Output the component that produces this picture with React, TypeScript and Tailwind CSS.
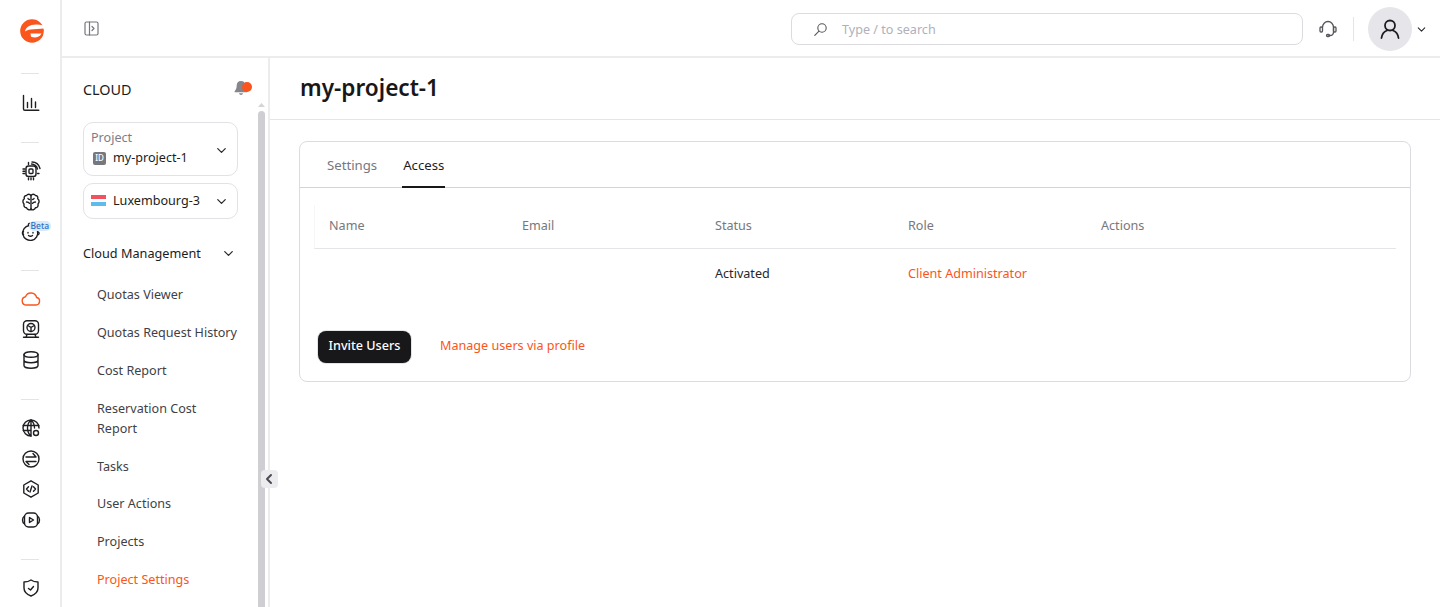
import { ChevronDown, ChevronLeft } from "lucide-react";

const FONT = "font-['Noto_Sans',sans-serif]";

function Ico({ children, color = "#1f1f23" }: { children: React.ReactNode; color?: string }) {
  return (
    <svg width="20" height="20" viewBox="0 0 20 20" fill="none" stroke={color} strokeWidth="1.4" strokeLinecap="round" strokeLinejoin="round">
      {children}
    </svg>
  );
}

function RailItem({ children }: { children: React.ReactNode }) {
  return <div className="relative flex h-[30.5px] w-full items-center justify-center pl-px">{children}</div>;
}

function RailDivider({ mt }: { mt: string }) {
  return <div className={`h-px w-[18px] shrink-0 bg-[#e4e4e7] ${mt}`} />;
}

function Logo() {
  return (
    <svg width="24" height="26" viewBox="0 0 24 26" className="ml-[3px]">
      <circle cx="12" cy="13" r="11.800" fill="#f9551c" />
      <path d="M5 13.500C6 8 12 4.500 24.500 7.500L24.500 10.500 10.500 11.500C8.500 11.700 6.500 12.500 5 13.500Z" fill="#fff" />
      <path d="M10.500 15.500H21.500C19.500 19.500 15 20.500 11 18.800Z" fill="#fff" />
    </svg>
  );
}

function Rail() {
  return (
    <aside className="flex w-[62px] shrink-0 flex-col items-center border-r-2 border-[#ececee] bg-white">
      <div className="flex h-[62px] w-full shrink-0 items-center justify-center">
        <Logo />
      </div>
      <RailDivider mt="mt-[11px]" />
      <div className="mt-[14px] w-full">
        <RailItem>
          <Ico>
            <path d="M2.500 2.500v13.500c0 .8.5 1.300 1.300 1.300h14" />
            <path d="M6.500 9.500v5M10.500 5.500v9M14.500 9v5.500" />
          </Ico>
        </RailItem>
      </div>
      <RailDivider mt="mt-[23.500px]" />
      <div className="mt-[13px] w-full">
        <RailItem>
          <Ico>
            <rect x="5" y="5" width="10" height="10.500" rx="2.500" />
            <rect x="8" y="8" width="4" height="4.500" rx="1" />
            <path d="M2 8h2M2 10.200h2M2 12.500h2M7.500 17v1.800M10 17v1.800M12.500 17v1.800M16.500 12.500h1.500M7.500 3.500V1.500M10.500 3c2.500 0 5.500 2 6 5M11 1c4 0 7 3 8 6.500" />
          </Ico>
        </RailItem>
        <RailItem>
          <Ico>
            <path d="M10 3.500v13.500" />
            <path d="M10 3.500C9 1.800 6.500 1.800 5.500 3.500 3.800 3.500 2.800 5 3.300 6.700 1.500 8 1.500 10.500 3 12c-.5 2 .5 3.500 2.500 3.800.8 2.200 3.500 2.700 4.500 1.200" />
            <path d="M10 3.500c1-1.700 3.500-1.700 4.500 0 1.700 0 2.700 1.500 2.200 3.200 1.800 1.300 1.800 3.800.3 5.300.5 2-.5 3.500-2.500 3.800-.8 2.200-3.500 2.700-4.500 1.200" />
            <path d="M5.500 10c1.500 0 2.500.5 3 1.300M14.500 10c-1.500 0-2.500.5-3 1.300M7 6.500c.3.700.8 1 1.500 1M13 6.500c-.3.700-.8 1-1.500 1" />
          </Ico>
        </RailItem>
        <RailItem>
          <Ico>
            <path d="M8 3.500a7.500 7.500 0 1 0 8.500 5.500" />
            <path d="M8 3.500C6.800 2.500 7.500 1 9 1.500" />
            <path d="M7 10.500v.5M12 10.500v.5M7.500 13.500c1.200 1 2.800 1 4 0" />
            <path d="M2.500 9.500c-1.500.3-1.500 2.700 0 3M17 10c1.500.3 1.500 2.300 0 2.700" />
          </Ico>
          <span className="absolute left-[29px] top-[4px] rounded-full bg-[#d8e9fb] px-[1.500px] text-[8.500px] leading-[10px] font-medium text-[#2f6fc4]">Beta</span>
        </RailItem>
      </div>
      <RailDivider mt="mt-[22px]" />
      <div className="mt-[13px] w-full">
        <RailItem>
          <Ico color="#f9551c">
            <path d="M5.500 16h9.500a3.800 3.800 0 0 0 .6-7.500A5.800 5.800 0 0 0 4.500 7.700 4.200 4.200 0 0 0 5.500 16Z" />
          </Ico>
        </RailItem>
        <RailItem>
          <Ico>
            <rect x="2.500" y="1.800" width="15" height="13.500" rx="3.500" />
            <circle cx="10" cy="8.500" r="4" />
            <path d="M10 8.500v4M10 8.500 6.800 6.500M10 8.500l3.200-2" />
            <path d="M2.500 18.200h15M6 15.500l-1 2.700M14 15.500l1 2.700" />
          </Ico>
        </RailItem>
        <RailItem>
          <Ico>
            <ellipse cx="10" cy="4.500" rx="7" ry="2.800" />
            <path d="M3 4.500v11c0 1.500 3 2.800 7 2.800s7-1.300 7-2.800v-11M3 10c0 1.500 3 2.800 7 2.800s7-1.300 7-2.800" />
          </Ico>
        </RailItem>
      </div>
      <RailDivider mt="mt-[24px]" />
      <div className="mt-[13px] w-full">
        <RailItem>
          <Ico>
            <path d="M18 10a8 8 0 1 0-8 8" />
            <path d="M10 2c-2.500 2-3.500 5-3.500 8s1 6 3.500 8M10 2c2.500 2 3.500 5 3.500 8M2.300 7.500h15.400M2.300 12.500H10M10 2v16" />
            <circle cx="15" cy="15" r="2.500" />
          </Ico>
        </RailItem>
        <RailItem>
          <Ico>
            <circle cx="10" cy="10" r="8" />
            <path d="M5 8h10l-3-3.500M15 12.500H5l3 3" />
          </Ico>
        </RailItem>
        <RailItem>
          <Ico>
            <path d="M10 1.800 17.200 6v8L10 18.200 2.800 14V6Z" />
            <path d="M7.500 7.800 5.500 10l2 2.200M12.500 7.800l2 2.200-2 2.200M11 7l-2 6" />
          </Ico>
        </RailItem>
        <RailItem>
          <Ico>
            <rect x="3.500" y="3" width="13" height="14" rx="4" />
            <path d="M3.500 6C2 7 1.500 8.500 1.500 10s.5 3 2 4M16.500 6c1.500 1 2 2.500 2 4s-.5 3-2 4" />
            <path d="M8.500 7.500v5l4-2.500Z" />
          </Ico>
        </RailItem>
      </div>
      <RailDivider mt="mt-[24px]" />
      <div className="mt-[13px] w-full">
        <RailItem>
          <Ico>
            <path d="M10 2c2 1.500 4.500 2 7 2v6c0 4-3 6.500-7 8-4-1.500-7-4-7-8V4c2.500 0 5-.5 7-2Z" />
            <path d="m7.500 10.500 2 1.500 3-3.500" />
          </Ico>
        </RailItem>
      </div>
    </aside>
  );
}

const menu = ["Quotas Viewer", "Quotas Request History", "Cost Report", "Reservation Cost Report", "Tasks", "User Actions", "Projects"];

function Sidebar() {
  return (
    <div className="relative flex w-[208px] shrink-0 border-r-2 border-[#ececee] bg-white">
      <div className="flex w-[196px] shrink-0 flex-col overflow-hidden pl-[21px]">
        <div className="flex h-[64px] shrink-0 items-center justify-between pb-[1px]">
          <span className="text-[14.400px] text-[#1c1c20]">CLOUD</span>
          <span className="relative mr-[9px] mt-[-4px] flex">
            <svg width="16" height="16" viewBox="0 0 16 16" fill="#85858c">
              <path d="M8 1c-2.800 0-4.300 2-4.300 4.500 0 3-1 4.500-2.200 6l.3.800h12.400l.3-.8C13.300 10 12.300 8.500 12.300 5.500 12.300 3 10.800 1 8 1ZM6 13.300c.3 1 1 1.700 2 1.700s1.700-.7 2-1.700Z" />
            </svg>
            <span className="absolute right-[-3px] top-[2px] h-[10px] w-[10px] rounded-full bg-[#f9551c]" />
          </span>
        </div>
        <div className="flex w-[155px] shrink-0 flex-col">
          <div className="flex h-[54px] items-center justify-between rounded-[10px] border border-[#e2e2e6] pl-[7px] pr-[8px]">
            <div className="flex flex-col">
              <span className="mt-[-1px] text-[12.600px] leading-[18px] text-[#7d7d8a]">Project</span>
              <span className="mt-[1px] flex items-center gap-[7px] text-[12.600px] leading-[20px] text-[#1c1c20]">
                <span className="ml-[2px] flex h-[13px] w-[13px] items-center justify-center rounded-[2px] bg-[#77777e] text-[8px] font-medium text-white">ID</span>
                my-project-1
              </span>
            </div>
            <ChevronDown size={15} className="mt-[2px] text-[#2a2a2e]" />
          </div>
          <div className="mt-[7px] flex h-[36px] items-center justify-between rounded-[10px] border border-[#e2e2e6] pl-[7px] pr-[8px]">
            <span className="flex items-center gap-[7px] text-[12.600px] text-[#1c1c20]">
              <span className="flex w-[15px] flex-col">
                <span className="h-[4px] bg-[#f0525f]" />
                <span className="h-[3px] bg-white" />
                <span className="h-[4px] bg-[#5dbcec]" />
              </span>
              Luxembourg-3
            </span>
            <ChevronDown size={15} className="text-[#2a2a2e]" />
          </div>
        </div>
        <div className="mt-[24px] flex w-[153px] items-center justify-between">
          <span className="text-[12.700px] leading-[20px] text-[#1c1c20]">Cloud Management</span>
          <ChevronDown size={15} className="text-[#2a2a2e]" />
        </div>
        <ul className="mt-[22px] flex w-[155px] flex-col gap-[17.900px] pl-[14px] text-[12.600px] leading-[20px] text-[#3f3f46]">
          {menu.map((m) => (
            <li key={m}>{m}</li>
          ))}
          <li className="text-[#f9551c]">Project Settings</li>
        </ul>
      </div>
      <div className="flex w-[7px] flex-col pt-[44px]">
        <svg width="7" height="6" viewBox="0 0 7 6" className="mb-[3px] shrink-0" fill="#d4d4d8">
          <path d="M3.500 1 7 5H0Z" />
        </svg>
        <div className="flex-1 rounded-t-[4px] bg-[#cfcfd3]" />
      </div>
      <button className="absolute left-[199px] top-[412px] flex h-[18px] w-[17px] items-center justify-center rounded-[4px] bg-[#ececee]">
        <ChevronLeft size={16} strokeWidth={3} className="mr-[1px] text-[#4a4a52]" />
      </button>
    </div>
  );
}

function TopBar() {
  return (
    <header className="flex h-[58px] shrink-0 items-center border-b-2 border-[#ececee] bg-white pl-[22px]">
      <svg width="15" height="15" viewBox="0 0 15 15" fill="none" stroke="#77777e" strokeWidth="1.2" strokeLinejoin="round" strokeLinecap="round">
        <rect x="1" y="1" width="13" height="13" rx="1.500" />
        <path d="M5.500 1v13M8 5.500 10 7.500 8 9.500" />
      </svg>
      <div className="ml-[692px] mt-[2px] flex h-[32px] w-[512px] items-center rounded-[8px] border border-[#dcdce0] pl-[21px]">
        <svg width="15" height="15" viewBox="0 0 15 15" fill="none" stroke="#55555c" strokeWidth="1.1" strokeLinecap="round">
          <circle cx="9" cy="6" r="4.200" />
          <path d="M6 9.200 1.800 13.400" />
        </svg>
        <span className="ml-[14px] mt-[2px] text-[12.600px] text-[#b0b0bc]">Type / to search</span>
      </div>
      <svg className="ml-[15px] mt-[2px]" width="20" height="20" viewBox="0 0 20 20" fill="none" stroke="#55555c" strokeWidth="1.300" strokeLinecap="round" strokeLinejoin="round">
        <path d="M4.500 8.500C4.500 5 7 2.500 10 2.500s5.500 2.500 5.500 6v4.500c0 2-1.500 3.500-3.500 3.500h-1" />
        <rect x="2" y="8" width="2.500" height="5" rx="1" />
        <rect x="15.500" y="8" width="2.500" height="5" rx="1" />
        <rect x="8.500" y="15.500" width="3" height="2" rx="1" />
      </svg>
      <div className="ml-[15px] mt-[2px] h-[24px] w-px bg-[#e4e4e7]" />
      <div className="ml-[14px] mt-[2px] flex h-[44px] w-[44px] items-center justify-center rounded-full bg-[#e6e6ea]">
        <svg width="24" height="24" viewBox="0 0 24 24" fill="none" stroke="#1c1c20" strokeWidth="1.800" strokeLinecap="round">
          <circle cx="12" cy="8.500" r="5" />
          <path d="M3.500 21c.5-4 3-6.500 5.500-7.500M20.500 21c-.5-4-3-6.500-5.500-7.500" />
        </svg>
      </div>
      <ChevronDown size={13} className="ml-[3px] mt-[2px] text-[#2a2a2e]" />
    </header>
  );
}

function Table() {
  const cols = ["Name", "Email", "Status", "Role", "Actions"];
  return (
    <div className="mx-[14px] mt-[17px]">
      <div className="grid h-[44px] grid-cols-[193px_193px_193px_193px_1fr] items-center border-b border-l border-b-[#e4e4e9] border-l-[#f6f6f7] pb-[1px] pl-[14px] text-[12.600px] text-[#77777e]">
        {cols.map((c) => (
          <span key={c}>{c}</span>
        ))}
      </div>
      <div className="grid h-[50px] grid-cols-[193px_193px_193px_193px_1fr] items-center pl-[15px] text-[12.600px]">
        <span />
        <span />
        <span className="text-[#27272a]">Activated</span>
        <span className="text-[#f9551c]">Client Administrator</span>
        <span />
      </div>
    </div>
  );
}

export default function App() {
  return (
    <div className={`flex h-[607px] w-[1440px] overflow-hidden bg-white ${FONT}`}>
      <Rail />
      <div className="flex min-w-0 flex-1 flex-col">
        <TopBar />
        <div className="flex min-h-0 flex-1">
          <Sidebar />
          <main className="flex min-w-0 flex-1 flex-col">
            <div className="flex h-[62px] shrink-0 items-center border-b border-[#e4e4e9] pb-[2px] pl-[30px]">
              <h1 className="text-[22.600px] font-semibold text-[#18181b]">my-project-1</h1>
            </div>
            <div className="mx-[29px] mt-[21px] flex h-[241px] flex-col rounded-[8px] border border-[#dcdce0]">
              <div className="flex h-[46px] shrink-0 gap-[24px] border-b border-[#d4d4d8] pl-[26px] text-[13.200px]">
                <span className="mb-[-1px] flex items-center border-b-2 border-transparent px-px pt-[4px] text-[#77777e]">Settings</span>
                <span className="mb-[-1px] flex items-center border-b-2 border-[#18181b] px-px pt-[4px] text-[#1c1c20]">Access</span>
              </div>
              <Table />
              <div className="ml-[18px] mt-[31.500px] flex items-center gap-[29px]">
                <button className="h-[32px] w-[93px] rounded-[8px] bg-[#18181a] pb-[1px] text-[12.600px] font-medium text-white shadow-[0_0_0_1px_#e4e4e7]">Invite Users</button>
                <span className="mb-[1px] text-[12.600px] text-[#f9551c]">Manage users via profile</span>
              </div>
            </div>
          </main>
        </div>
      </div>
    </div>
  );
}
